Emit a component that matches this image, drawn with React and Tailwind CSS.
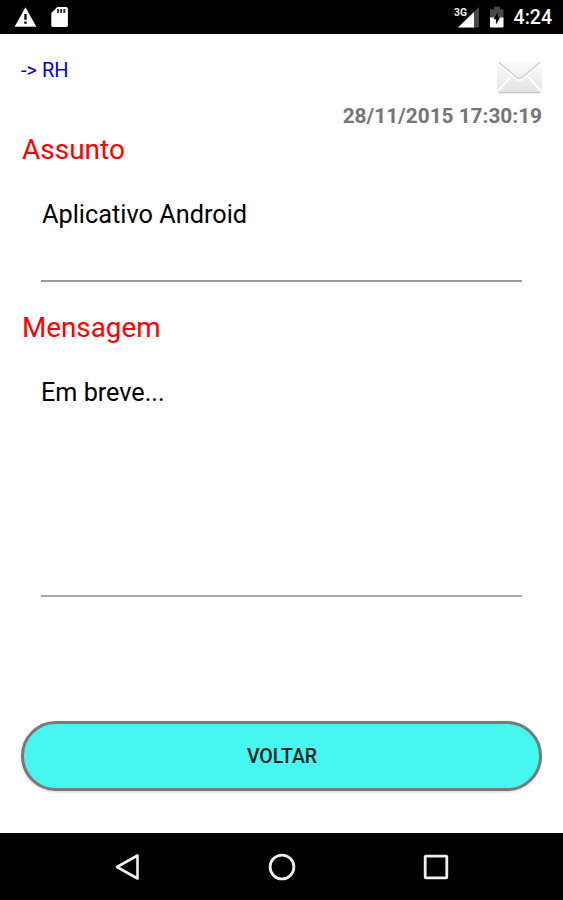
function StatusBar() {
  return (
    <header className="flex h-[34px] items-start bg-black text-white">
      <svg className="mt-[6px] ml-[14px]" width="23" height="22" viewBox="0 0 23 22">
        <path d="M11.5 1.2 22.4 20.8H.6z" fill="#fff" />
        <path d="M10.3 8h2.400v5.800h-2.400zM10.300 15.600h2.400v2.200h-2.400z" fill="#000" />
      </svg>
      <svg className="mt-[6px] ml-[14px]" width="17" height="22" viewBox="0 0 17 22">
        <path d="M6.3 1H15a1.9 1.9 0 0 1 1.9 1.9v16.3a1.9 1.9 0 0 1-1.9 1.9H2.2a1.9 1.9 0 0 1-1.9-1.9V7z" fill="#fff" />
        <path d="M6.1 3h2v4h-2zM9.2 3h2v4h-2zM12.3 3h2v4h-2z" fill="#333" />
      </svg>

      <div className="ml-auto flex items-start">
        <svg className="mt-[6px]" width="27" height="22" viewBox="0 0 27 22">
          <path d="M25 1v20.600H4z" fill="#484848" />
          <path d="M20 5.900v15.700H4z" fill="#fff" />
          <text x="0" y="10" fill="#eee" stroke="#000" strokeWidth="2" paintOrder="stroke" fontSize="11.500" fontWeight="700" fontFamily="Roboto, sans-serif" textLength="13" lengthAdjust="spacingAndGlyphs">3G</text>
        </svg>
        <svg className="mt-[6px] ml-[8px]" width="16" height="22" viewBox="0 0 16 22">
          <path d="M5 .8h6v2.400h2.200a1.300 1.300 0 0 1 1.300 1.300V12H1V4.500a1.300 1.300 0 0 1 1.300-1.300H5z" fill="#484848" />
          <path d="M1 11.600h13.500v8.600a1.300 1.300 0 0 1-1.300 1.300H2.300A1.300 1.300 0 0 1 1 20.200z" fill="#fff" />
          <path d="M8.800 6v5.200h2.400L7 18.500v-5.200H4.500z" fill="#000" />
        </svg>
        <span className="mt-[6px] mr-[11px] ml-[9px] text-[19.500px] leading-[24px] font-medium">4:24</span>
      </div>
    </header>
  );
}

function Envelope() {
  return (
    <svg width="47" height="35" viewBox="0 0 47 35">
      <defs>
        <linearGradient id="paper" x1="0" y1="0" x2="0" y2="1">
          <stop offset="0" stopColor="#fafafa" />
          <stop offset="0.5" stopColor="#f0f0f0" />
          <stop offset="1" stopColor="#e2e2e2" />
        </linearGradient>
      </defs>
      <rect x="1" y="1.500" width="45" height="31.500" rx="2.500" fill="url(#paper)" />
      <path d="M3 32.700h41" stroke="#c4c4c4" strokeWidth="1.300" />
      <path d="M2 31 14.500 17M45 31 32.500 17" stroke="#fff" strokeWidth="2" fill="none" />
      <path d="M3 4 21 19.300q2.500 1.800 5 0L44 4" stroke="#fff" strokeWidth="2.500" fill="none" />
      <path d="M3 2.500 21 17.500q2.500 1.800 5 0L44 2.500" stroke="#cdcdcd" strokeWidth="1.300" fill="none" />
    </svg>
  );
}

function NavBar() {
  return (
    <nav className="flex h-[67px] items-center justify-between bg-black px-[113px]">
      <svg width="28" height="28" viewBox="0 0 28 28" fill="none" stroke="#eee" strokeWidth="2.600" strokeLinejoin="round">
        <path d="M24.500 2.500v23L4 14z" />
      </svg>
      <svg width="28" height="28" viewBox="0 0 28 28" fill="none" stroke="#eee" strokeWidth="2.800">
        <circle cx="14" cy="14" r="11.900" />
      </svg>
      <svg width="28" height="28" viewBox="0 0 28 28" fill="none" stroke="#eee" strokeWidth="2.800">
        <rect x="3.200" y="3.200" width="21.600" height="21.600" rx="0.800" />
      </svg>
    </nav>
  );
}

export default function App() {
  return (
    <div className="flex h-[900px] w-[563px] flex-col overflow-hidden bg-white font-['Roboto',sans-serif]">
      <StatusBar />

      <main className="flex flex-1 flex-col px-[21px]">
        <div className="flex h-[68px] items-start justify-between">
          <span className="mt-[24px] text-[20px] leading-[25px] text-[#0000e0]">-&gt; RH</span>
          <div className="mt-[26px] mr-[-1px]">
            <Envelope />
          </div>
        </div>
        <p className="text-right text-[20.800px] leading-[28px] font-bold text-[#757575]">28/11/2015 17:30:19</p>

        <h2 className="mt-[2px] pl-px text-[28px] leading-[36px] text-[#ff0000]">Assunto</h2>
        <div className="mx-[20px] mt-[31px] h-[83px] border-b-2 border-[#999] pl-px text-[25.300px] leading-[32px] text-black">
          Aplicativo Android
        </div>

        <h2 className="mt-[28px] pl-px text-[27.800px] leading-[36px] text-[#ff0000]">Mensagem</h2>
        <div className="mx-[20px] mt-[31px] h-[220px] border-b-2 border-[#aaa] text-[25.200px] leading-[32px] text-black">
          Em breve...
        </div>

        <button className="mt-[124px] h-[70px] w-full rounded-full border-[3.500px] border-[#7d7777] bg-[#46f7ef] pt-[2px] pl-px text-[19.500px] font-medium text-[#06201f] shadow-[0_1px_3px_rgba(0,0,0,0.18)]">
          VOLTAR
        </button>
      </main>

      <NavBar />
    </div>
  );
}
